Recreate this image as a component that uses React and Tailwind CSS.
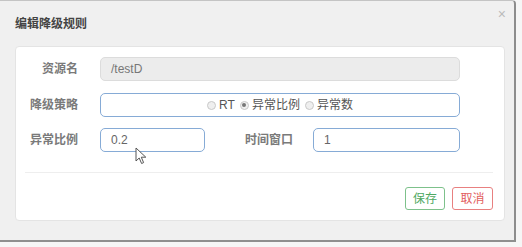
import React from "react";

const font = { fontFamily: "'Liberation Sans', 'Noto Sans CJK SC', sans-serif" };

const Radio = ({ checked, label }) => (
  <span className="flex items-center gap-[3px]">
    <span className="flex h-[9px] w-[9px] items-center justify-center rounded-full border border-[#c9c9c9] bg-[#efefef]">
      {checked && <span className="h-[4px] w-[4px] rounded-full bg-[#777]" />}
    </span>
    <span className="text-[12px] text-[#555]">{label}</span>
  </span>
);

const Label = ({ children, className = "" }) => (
  <div className={`shrink-0 whitespace-nowrap text-[12px] font-bold text-[#7a7a7a] ${className}`}>
    {children}
  </div>
);

export default function App() {
  return (
    <div className="relative h-[247px] w-[522px] overflow-hidden bg-[#f6f6f6]" style={font}>
      <div className="flex h-[242px] w-[516px] flex-col rounded-tr-[4px] border-t border-r-2 border-b-2 border-t-[#c4c4c4] border-r-[#8d8d8d] border-b-[#8f8f8f] bg-[#f0f0f0] pl-[15px]">
        <div className="flex h-[45px] items-center">
          <h1 className="text-[12px] font-bold text-[#444]">编辑降级规则</h1>
          <span className="mr-[8px] ml-auto mb-[19px] text-[14px] leading-none text-[#bbb]">×</span>
        </div>

        <div className="w-[490px] rounded-[4px] border border-[#e4e4e4] bg-white px-[9px] pt-[10px] pb-[10px]">
          <div className="flex items-center">
            <Label className="w-[53px] text-right">资源名</Label>
            <div className="ml-[22px] flex h-[24px] w-[360px] shrink-0 items-center rounded-[5px] border border-[#dcdcdc] bg-[#ececec] px-[10px] text-[12px] text-[#777]">
              /testD
            </div>
          </div>

          <div className="mt-[12px] flex items-center">
            <Label className="w-[53px] text-right">降级策略</Label>
            <div className="ml-[22px] flex h-[24px] w-[360px] shrink-0 items-center justify-center gap-[5px] rounded-[5px] border border-[#86abd6] bg-white">
              <Radio label="RT" />
              <Radio checked label="异常比例" />
              <Radio label="异常数" />
            </div>
          </div>

          <div className="mt-[11px] flex items-center">
            <Label className="w-[53px] text-right">异常比例</Label>
            <div className="ml-[22px] flex h-[24px] w-[105px] shrink-0 items-center rounded-[5px] border border-[#86abd6] px-[10px] text-[12px] text-[#666]">
              0.2
            </div>
            <Label className="ml-[40px] w-[48px]">时间窗口</Label>
            <div className="ml-[20px] flex h-[24px] w-[147px] shrink-0 items-center rounded-[5px] border border-[#86abd6] px-[10px] text-[12px] text-[#666]">
              1
            </div>
          </div>

          <div className="mt-[20px] h-px w-[468px] bg-[#eeeeee]" />

          <div className="mt-[14px] flex w-[468px] justify-end gap-[7px]">
            <button className="h-[23px] w-[40px] rounded-[3px] border border-[#7dc18b] bg-white text-[12px] text-[#4ea862]">
              保存
            </button>
            <button className="h-[23px] w-[41px] rounded-[3px] border border-[#e88080] bg-white text-[12px] text-[#e25c5c]">
              取消
            </button>
          </div>
        </div>
      </div>

      <svg
        className="absolute left-[135px] top-[147px]"
        width="13"
        height="18"
        viewBox="0 0 13 18"
      >
        <path
          d="M1 1 L1 14 L4.2 11 L6.6 16.5 L8.6 15.6 L6.3 10.2 L10.8 10.2 Z"
          fill="#fff"
          stroke="#555"
          strokeWidth="1"
          strokeLinejoin="round"
        />
      </svg>
    </div>
  );
}
